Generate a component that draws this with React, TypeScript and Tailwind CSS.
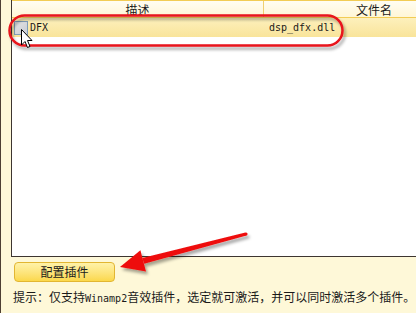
export default function App() {
  return (
    <div className="relative w-[416px] h-[313px] overflow-hidden bg-[#fef8d8] border-l border-[#4d3f33] text-[12px] text-[#1a1a1a] font-['Noto_Sans_CJK_SC',sans-serif]">
      {/* 插件列表 */}
      <div className="ml-[10px] w-[473px] h-[257px] border-l border-b border-[#3d3530] bg-white flex flex-col">
        <div className="h-[18px] flex border-t border-b border-[#f2cc55] bg-gradient-to-b from-[#fffdf2] to-[#fff6d6] leading-[17px]">
          <div className="w-[252px] border-r border-[#f0d070] text-center">描述</div>
          <div className="flex-1 text-center">文件名</div>
        </div>
        <div className="h-[19px] flex items-center bg-gradient-to-b from-[#fdf0bc] to-[#f9e49a] font-['DejaVu_Sans_Mono',monospace] text-[10px]">
          <div className="ml-[2px] w-[14px] h-[14px] border border-[#7f9db9] bg-gradient-to-br from-[#e4e4e4] to-[#c8ccd4]" />
          <div className="w-[238px] pl-[2px]">DFX</div>
          <div className="pl-[3px]">dsp_dfx.dll</div>
        </div>
      </div>

      <button className="mt-[5px] ml-[13px] w-[101px] h-[20px] rounded-[4px] border border-[#e2b632] bg-gradient-to-b from-[#fff2a8] to-[#fbd84a] text-[12px] leading-[18px] text-[#1a1a1a]">
        配置插件
      </button>

      <div className="mt-[7px] ml-[12px] leading-[16px] whitespace-nowrap">
        提示：仅支持<span className="font-['DejaVu_Sans_Mono',monospace] text-[10px]">Winamp2</span>音效插件，选定就可激活，并可以同时激活多个插件。
      </div>

      {/* 标注 */}
      <svg className="absolute inset-0 pointer-events-none" width="416" height="313">
        <defs>
          <filter id="sh" x="-10%" y="-30%" width="120%" height="160%">
            <feDropShadow dx="2" dy="3" stdDeviation="1.6" floodColor="#000" floodOpacity="0.35" />
          </filter>
        </defs>
        <rect x="8.5" y="15.5" width="333" height="30" rx="15" fill="none" stroke="#e8121a" strokeWidth="2.5" filter="url(#sh)" />
        <g filter="url(#sh)" fill="#ee1111">
          <polygon points="244.4,232.4 245.6,235.6 143.2,263.8 141.2,258.0" />
          <circle cx="245" cy="234" r="1.6" />
          <polygon points="119,267 139.4,250.3 145.0,271.5" />
        </g>
        <path
          d="M20.5 29.5 L20.5 45 L24 41.5 L26.5 47.5 L29 46.5 L26.5 40.5 L31 40.5 Z"
          fill="#fff"
          stroke="#000"
          strokeWidth="1"
          strokeLinejoin="round"
        />
      </svg>
    </div>
  );
}
